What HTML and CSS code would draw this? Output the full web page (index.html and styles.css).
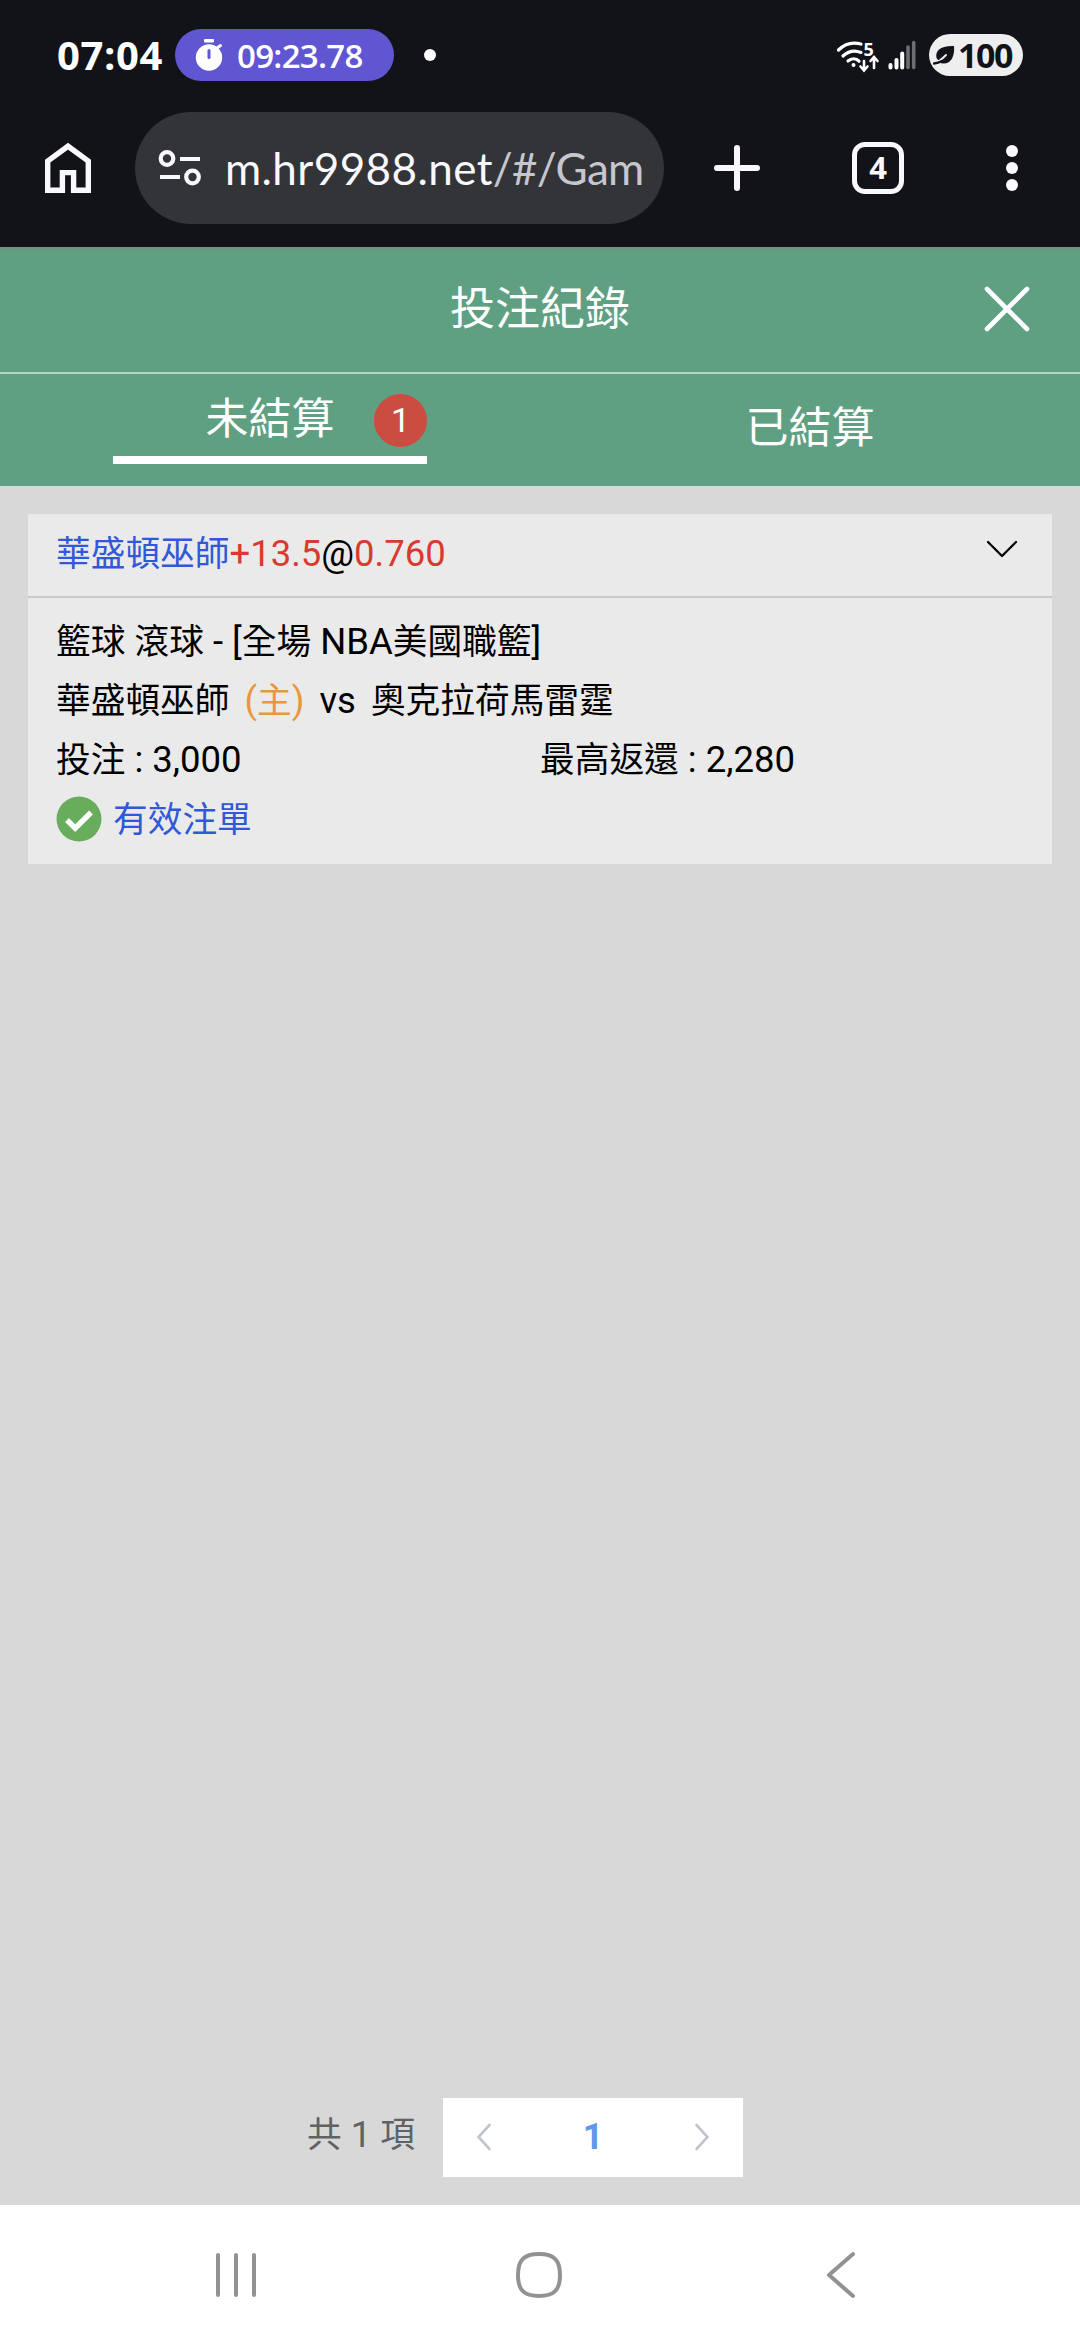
FILE: index.html
```html
<!DOCTYPE html>
<html lang="zh-Hant">
<head>
<meta charset="utf-8">
<title>投注紀錄</title>
<link rel="stylesheet" href="styles.css">
</head>
<body>
<div class="screen">
  <div class="status-bar">
    <span class="clock">07:04</span>
    <div class="timer-chip">
      <svg width="28" height="34" viewBox="0 0 28 34"><rect x="9" y="1" width="10" height="3.4" rx="1" fill="#fff"/><path d="M22 10L25.500 7.500" stroke="#fff" stroke-width="3" stroke-linecap="round"/><circle cx="14" cy="19.500" r="13.200" fill="#fff"/><path d="M14 12.500v7" stroke="#6056d2" stroke-width="3" stroke-linecap="round"/></svg>
      <span>09:23.78</span>
    </div>
    <span class="status-dot"></span>
    <div class="status-icons">
      <svg class="wifi" width="46" height="36" viewBox="0 0 46 36" fill="none" stroke="#fff" stroke-width="3.200" stroke-linecap="round"><path d="M3.500 13C10 6.500 18 4.800 26 7"/><path d="M8 19c5.500-5.200 12-6 18-3.600"/><path d="M13 24c3.500-3 8-3 11 .2"/><circle cx="18.500" cy="28" r="2" fill="#fff" stroke="none"/><path d="M29 24v8M25.500 29.500l3.500 4 3.500-4M39 31V21M35.500 24l3.500-4 3.500 4" stroke-width="2.600"/><text x="28.500" y="18.500" class="wifi-band">5</text></svg>
      <svg class="signal" width="28" height="30" viewBox="0 0 28 30" stroke="#fff" stroke-width="4" stroke-linecap="round"><path d="M2.500 25v2.500M8.500 20v7.500M14.200 13.500v14"/><path d="M20 7v20.500M25.700 2.500v25" stroke="#6d6e72" stroke-width="3.600"/></svg>
      <div class="battery">
        <svg width="22" height="20" viewBox="0 0 22 20"><path d="M3.500 13C2 6 7 .5 21 1 22 11 18 19 10 18.500 7.500 18.300 6.500 17 6.500 17z" fill="#111318"/><path d="M5 16.500C8 15 10 13 13 10" stroke="#eee" stroke-width="2" fill="none" stroke-linecap="round"/><path d="M1 18.500C4 18.300 6.500 17.500 9 16" stroke="#111318" stroke-width="2.400" fill="none" stroke-linecap="round"/></svg>
        <span>100</span>
      </div>
    </div>
  </div>

  <div class="browser-bar">
    <svg class="home" width="46" height="52" viewBox="0 0 46 52" fill="none" stroke="#f8f8fd" stroke-width="5.400"><path d="M2.700 48.300V19L23 4.200 43.300 19v29.300H28.600V30.600H17.400v17.700z"/></svg>
    <div class="address">
      <svg width="44" height="38" viewBox="0 0 44 38" fill="none" stroke="#f8f8fd" stroke-width="4.200"><circle cx="9" cy="9.500" r="6.300"/><path d="M22 10h20M2 28h20"/><circle cx="34.500" cy="28" r="6.300"/></svg>
      <div class="url">m.hr9988.net<span class="path">/#/Gam</span></div>
    </div>
    <svg class="plus" width="46" height="48" viewBox="0 0 46 48" stroke="#f8f8fd" stroke-width="6" stroke-linecap="round"><path d="M23 4v40M3 24h40"/></svg>
    <div class="tab-count">4</div>
    <svg class="more" width="14" height="48" viewBox="0 0 14 48" fill="#f8f8fd"><circle cx="7" cy="7" r="6"/><circle cx="7" cy="24" r="6"/><circle cx="7" cy="41" r="6"/></svg>
  </div>

  <header class="page-header">
    <h1>投注紀錄</h1>
    <svg class="close" width="48" height="48" viewBox="0 0 48 48" stroke="#fff" stroke-width="4.600" stroke-linecap="round"><path d="M4 4l40 40M44 4L4 44"/></svg>
  </header>
  <nav class="tabs">
    <div class="tab active"><div class="tab-label"><span>未結算</span><span class="badge">1</span></div></div>
    <div class="tab">已結算</div>
  </nav>

  <main class="content">
    <section class="card">
      <div class="card-head">
        <div><span class="zh blue">華盛頓巫師</span><span class="red">+13.5</span>@<span class="red">0.760</span></div>
        <svg width="34" height="20" viewBox="0 0 34 20" fill="none" stroke="#000" stroke-width="2.300" stroke-linecap="round" stroke-linejoin="round"><path d="M3 3l14 14L31 3"/></svg>
      </div>
      <div class="card-body">
        <div class="row"><div><span class="zh">籃球</span> <span class="zh">滾球</span> - [<span class="zh">全場</span> NBA<span class="zh">美國職籃</span>]</div></div>
        <div class="row teams"><span class="zh">華盛頓巫師</span><span class="orange">(<span class="zh">主</span>)</span><span>vs</span><span class="zh">奧克拉荷馬雷霆</span></div>
        <div class="row amounts"><div><span class="zh">投注</span> : 3,000</div><div><span class="zh">最高返還</span> : 2,280</div></div>
        <div class="row state">
          <svg width="46" height="46" viewBox="0 0 46 46"><circle cx="23" cy="23" r="22.500" fill="#67ad5b"/><path d="M11 24l8.200 8.200L35 16.500" fill="none" stroke="#fff" stroke-width="5.400"/></svg>
          <span class="zh blue">有效注單</span>
        </div>
      </div>
    </section>
    <div class="pagination">
      <span class="total"><span class="zh">共</span> 1 <span class="zh">項</span></span>
      <div class="pager">
        <svg width="16" height="28" viewBox="0 0 16 28"><path d="M13.500 2L2.500 14l11 12"/></svg>
        <b>1</b>
        <svg width="16" height="28" viewBox="0 0 16 28"><path d="M2.500 2l11 12-11 12"/></svg>
      </div>
    </div>
  </main>

  <footer class="system-nav">
    <svg width="42" height="48" viewBox="0 0 42 48"><path d="M3 4v40M21 4v40M39 4v40"/></svg>
    <svg class="home-key" width="48" height="48" viewBox="0 0 48 48"><path d="M24 3C39 3 45 9 45 24S39 45 24 45 3 39 3 24 9 3 24 3z"/></svg>
    <svg width="32" height="48" viewBox="0 0 32 48"><path d="M28 3L4 24l24 21"/></svg>
  </footer>
</div>
</body>
</html>
```
FILE: styles.css
```css
* { box-sizing: border-box; }
body { margin: 0; font-family: Roboto, "Noto Sans CJK TC", sans-serif; }
svg { display: block; flex: none; }
.screen { width: 1080px; height: 2340px; display: flex; flex-direction: column; overflow: hidden; background: #d8d8d8; }

.status-bar { height: 110px; background: #111318; color: #fff; display: flex; align-items: center; padding: 0 57px 0 57px; font-family: "Open Sans", sans-serif; font-weight: 700; }
.clock { width: 118px; font-size: 40px; line-height: 52px; white-space: nowrap; letter-spacing: .6px; }
.timer-chip { width: 219px; height: 52px; border-radius: 26px; background: #6056d2; display: flex; align-items: center; padding-left: 20px; gap: 14px; font-size: 33px; font-weight: 600; letter-spacing: -.7px; }
.status-dot { width: 12px; height: 12px; border-radius: 50%; background: #fff; margin-left: 30px; }
.status-icons { margin-left: auto; display: flex; align-items: center; }
.wifi { margin-right: 7px; }
.wifi-band { font: 700 18px "Open Sans", sans-serif; fill: #fff; stroke: none; }
.signal { margin-right: 13px; }
.battery { width: 94px; height: 42px; border-radius: 21px; background: #eee; color: #111318; display: flex; align-items: center; padding-left: 4px; gap: 3px; font-size: 34px; letter-spacing: -1.500px; }

.browser-bar { height: 137px; background: #111318; display: flex; align-items: flex-start; padding-left: 45px; }
.home { margin: 32px 44px 0 0; }
.address { width: 529px; height: 112px; margin-top: 2px; border-radius: 56px; background: #333438; display: flex; align-items: center; padding-left: 23px; gap: 23px; }
.url { width: 417px; overflow: hidden; white-space: nowrap; font-family: Lato, sans-serif; font-size: 44px; line-height: 60px; letter-spacing: .4px; color: #f8f8fd; }
.url .path { color: #c6c6ce; letter-spacing: -.7px; }
.plus { margin: 34px 0 0 50px; }
.tab-count { width: 52px; height: 52px; margin: 32px 0 0 92px; border: 5.500px solid #f8f8fd; border-radius: 13px; color: #f8f8fd; font: 700 31px/41px "Open Sans", sans-serif; text-align: center; }
.more { margin: 34px 0 0 101px; }

.page-header { height: 127px; border-top: 2px solid #75907f; border-bottom: 2px solid #b8d4c7; background: #5fa083; color: #fff; display: flex; align-items: center; justify-content: flex-end; padding: 0 49px 4px 0; }
h1 { flex: 1; margin: 0; padding: 2px 0 0 97px; text-align: center; font-size: 45px; line-height: 60px; font-weight: 400; }
.tabs { height: 112px; background: #5fa083; color: #fff; display: flex; font-size: 43px; }
.tab { flex: 1; display: flex; justify-content: center; line-height: 109px; }
.tab-label { width: 314px; height: 90px; border-bottom: 8px solid #fff; display: grid; grid-template-columns: 1fr 129px 1fr; align-items: center; line-height: 60px; padding-top: 8px; }
.tab-label > span:first-child { grid-column: 2; text-align: center; }
.badge { justify-self: end; width: 53px; height: 53px; border-radius: 50%; background: #cb4d42; font-size: 34px; line-height: 53px; text-align: center; margin-top: 2px; }

.content { flex: 1; display: flex; flex-direction: column; justify-content: space-between; padding: 28px; font-size: 36.500px; color: #000; }
.zh { font-size: 34.700px; }
.card { height: 350px; background: #eaeaea; }
.card-head { height: 84px; border-bottom: 2px solid #c9c9c9; display: flex; justify-content: space-between; padding: 14px 33px 0 28px; line-height: 52px; }
.card-head svg { margin-top: 11px; }
.card-body { padding: 14px 28px 0; }
.row { height: 59px; line-height: 59px; white-space: nowrap; display: flex; align-items: baseline; }
.teams { gap: 15px; }
.amounts > div { width: 484px; }
.state { align-items: center; gap: 11px; }
.state .zh { padding-top: 3px; }
.state svg { margin-top: 1px; }
.blue { color: #3158d8; }
.red { color: #d93a2f; }
.orange { color: #e99640; }

.pagination { height: 79px; display: flex; align-items: center; padding-left: 279px; }
.total { width: 136px; color: #606266; white-space: nowrap; line-height: 50px; padding-bottom: 6px; }
.pager { width: 300px; height: 79px; background: #fff; display: flex; align-items: center; justify-content: space-between; padding: 0 33px 2px; color: #6099ea; }
.pager b { font-size: 36px; }
.pager svg { fill: none; stroke: #c0c4cc; stroke-width: 2.600px; stroke-linecap: round; }

.system-nav { height: 135px; background: #fff; display: flex; align-items: flex-start; justify-content: space-between; padding: 46px 223px 0 215px; }
.system-nav svg { fill: none; stroke: #929292; stroke-width: 4px; stroke-linecap: round; stroke-linejoin: round; }
.system-nav .home-key { margin-right: 5px; }
```
